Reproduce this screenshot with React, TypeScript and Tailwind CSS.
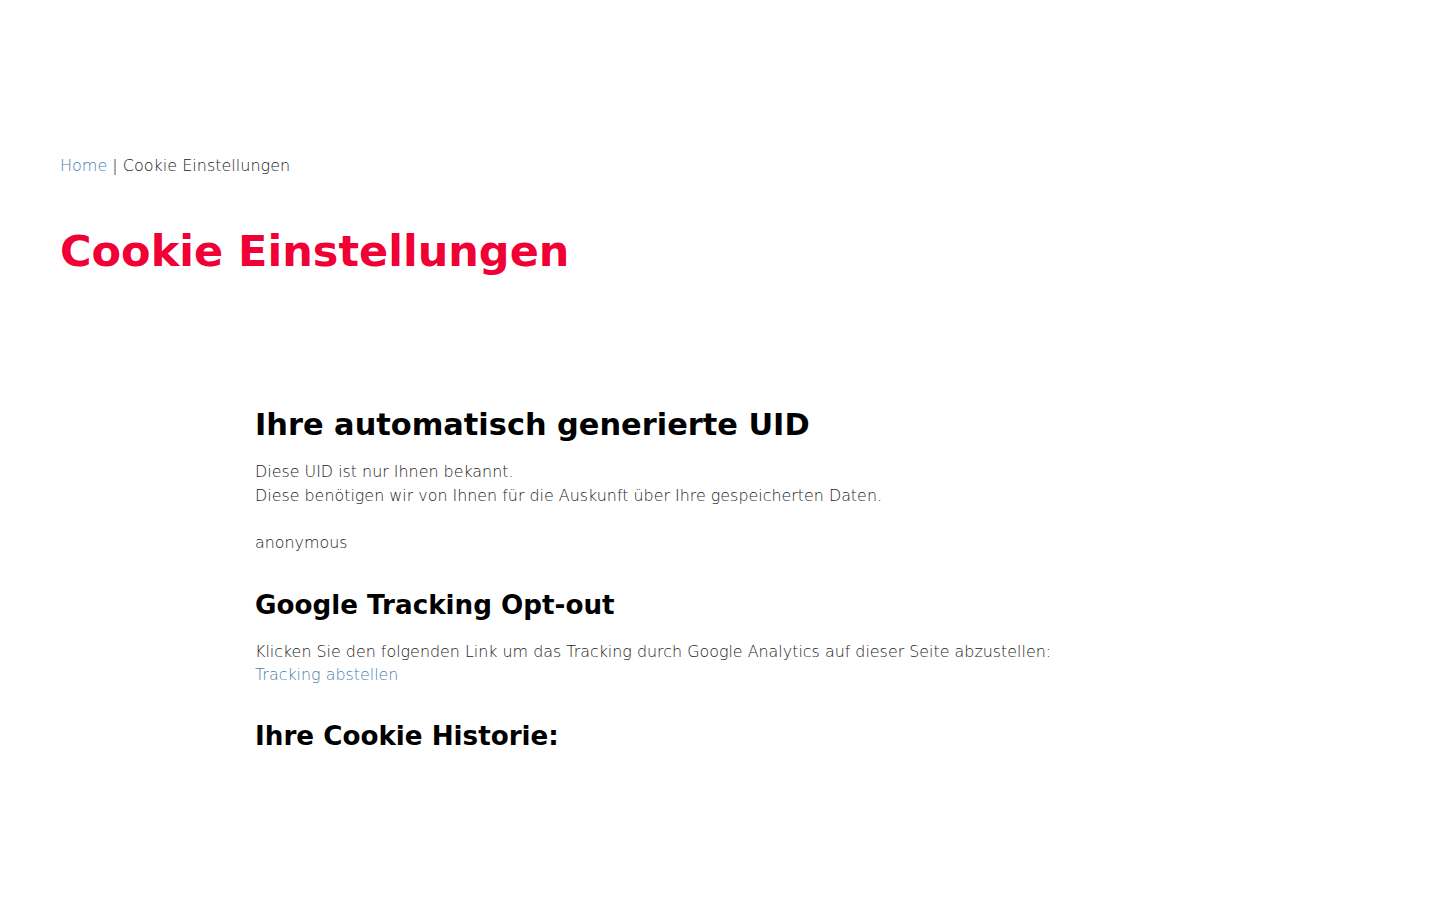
export default function App() {
  return (
    <div className="min-h-screen bg-white font-['DejaVu_Sans',sans-serif] text-[#222]">
      <div className="px-[60px] pt-[155px]">
        <nav className="text-[16px] font-extralight leading-[22px]">
          <a href="#" className="text-[#4a80b0]">Home</a>
          <span> | Cookie Einstellungen</span>
        </nav>
        <h1 className="mt-[48px] text-[43px] font-bold leading-[52px] text-[#f00035]">
          Cookie Einstellungen
        </h1>
      </div>
      <main className="mx-auto mt-[129px] w-[930px] pb-[120px]">
        <section>
          <h2 className="text-[30.4px] font-bold leading-[38px] text-black">
            Ihre automatisch generierte UID
          </h2>
          <p className="mt-[16px] text-[15.9px] font-extralight leading-[23.7px]">
            Diese UID ist nur Ihnen bekannt.
            <br />
            Diese benötigen wir von Ihnen für die Auskunft über Ihre gespeicherten Daten.
            <br />
            <br />
            anonymous
          </p>
        </section>
        <section className="mt-[33px]">
          <h2 className="text-[26.2px] font-bold leading-[34px] text-black">
            Google Tracking Opt-out
          </h2>
          <p className="mt-[18px] text-[15.9px] font-extralight leading-[23px]">
            Klicken Sie den folgenden Link um das Tracking durch Google Analytics auf dieser Seite abzustellen:
            <br />
            <a href="#" className="text-[#4a80b0]">Tracking abstellen</a>
          </p>
        </section>
        <section className="mt-[33px]">
          <h2 className="text-[26.2px] font-bold leading-[34px] text-black">
            Ihre Cookie Historie:
          </h2>
        </section>
      </main>
    </div>
  );
}
